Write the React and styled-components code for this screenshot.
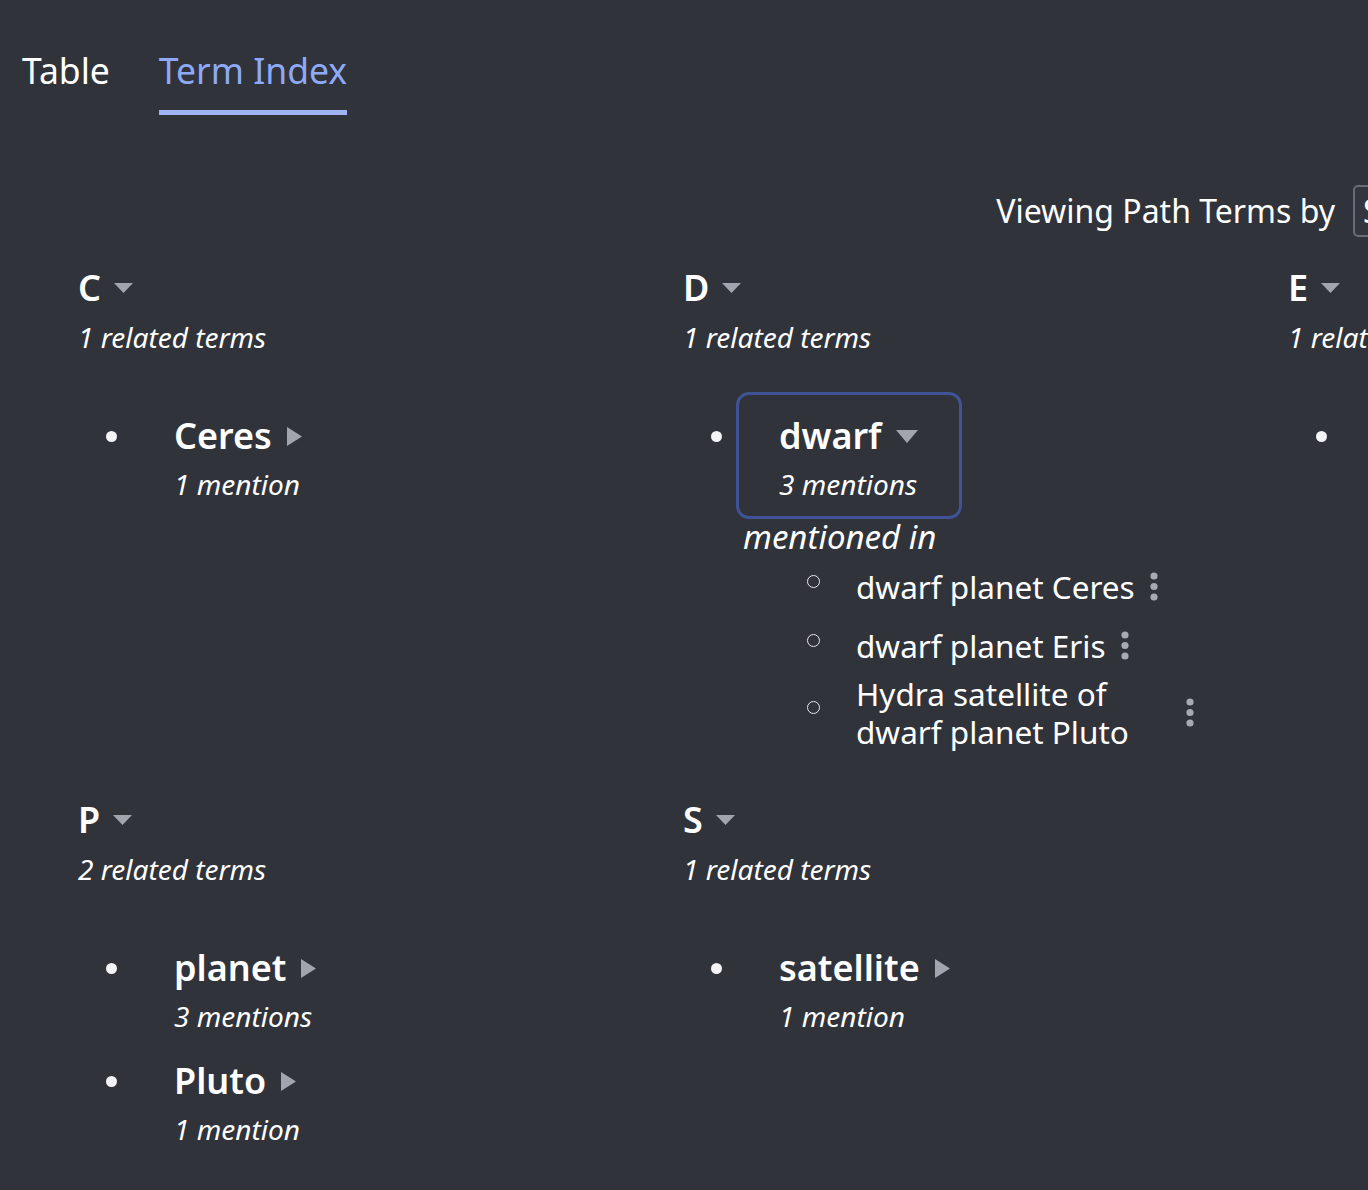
import React from "react";
import styled, { createGlobalStyle } from "styled-components";

const Global = createGlobalStyle`
  html, body {
    margin: 0;
    padding: 0;
    background: #31333b;
    overflow: hidden;
  }
  body {
    font-family: "Noto Sans", "Open Sans", sans-serif;
    color: #ffffff;
  }
  * { box-sizing: border-box; }
`;

const Page = styled.div`
  width: 1893px;
  min-height: 1190px;
  background: #31333b;
`;

const Tabs = styled.nav`
  display: flex;
  gap: 49px;
  padding: 44px 0 0 22px;
`;

const Tab = styled.button`
  background: none;
  border: none;
  padding: 0 0 14px;
  margin: 0;
  font-family: inherit;
  font-size: 35.5px;
  line-height: 52px;
  color: ${(p) => (p.$active ? "#8eaaf6" : "#ffffff")};
  border-bottom: 5px solid ${(p) => (p.$active ? "#9fb3f5" : "transparent")};
  cursor: pointer;
`;

const Controls = styled.div`
  display: flex;
  justify-content: flex-end;
  align-items: center;
  gap: 18px;
  margin-top: 70px;
  padding-right: 340px;
`;

const ControlLabel = styled.span`
  font-size: 32px;
  line-height: 44px;
`;

const Select = styled.div`
  width: 200px;
  height: 52px;
  border: 2px solid #696c74;
  border-radius: 5px;
  background: #34363d;
  font-size: 32px;
  line-height: 48px;
  padding-left: 8px;
  color: #ffffff;
  white-space: nowrap;
  overflow: hidden;
`;

const Grid = styled.div`
  display: grid;
  grid-template-columns: repeat(3, 605px);
  row-gap: 47px;
  align-items: start;
  padding-left: 78px;
  margin-top: 29px;
`;

const Section = styled.section`
  display: flex;
  flex-direction: column;
`;

const LetterHead = styled.div`
  display: flex;
  align-items: center;
  gap: 13px;
  font-size: 36px;
  font-weight: 600;
  line-height: 44px;
`;

const Related = styled.div`
  font-size: 28px;
  font-style: italic;
  line-height: 40px;
  margin-top: 7px;
`;

const TermList = styled.ul`
  list-style: none;
  margin: 42px 0 0;
  padding: 0;
  display: flex;
  flex-direction: column;
`;

const TermItem = styled.li`
  display: grid;
  grid-template-columns: 60px auto;
  justify-content: start;
`;

const Dot = styled.span`
  display: block;
  width: 11px;
  height: 11px;
  border-radius: 50%;
  background: #f4f4f7;
  margin: 32px 0 0 28px;
`;

const TermBody = styled.div`
  display: flex;
  flex-direction: column;
  align-items: flex-start;
`;

const TermButton = styled.button`
  display: flex;
  flex-direction: column;
  align-items: flex-start;
  background: none;
  border: none;
  color: #ffffff;
  font-family: inherit;
  text-align: left;
  padding: 15px 37px 8px 36px;
  border-radius: 6px;
  outline: ${(p) => (p.$focused ? "3px solid #3f5396" : "none")};
  outline-offset: 4px;
  cursor: pointer;
`;

const TermName = styled.span`
  display: flex;
  align-items: center;
  gap: 15px;
  font-size: 36px;
  font-weight: 600;
  line-height: 44px;
`;

const Count = styled.span`
  font-size: 28px;
  font-style: italic;
  line-height: 40px;
  margin-top: 6px;
`;

const MentionedIn = styled.div`
  font-size: 33px;
  font-style: italic;
  line-height: 40px;
  margin-top: 5px;
`;

const SubList = styled.ul`
  list-style: none;
  margin: 0;
  padding: 0;
`;

const SubItem = styled.li`
  display: flex;
  align-items: center;
  min-height: 59px;
`;

const Circle = styled.span`
  flex: none;
  width: 13px;
  height: 13px;
  border-radius: 50%;
  border: 1.5px solid #e8e8ec;
  margin: 0 36px 11px 64px;
`;

const SubText = styled.span`
  max-width: 315px;
  font-size: 31.5px;
  line-height: 38px;
`;

const Kebab = styled.button`
  flex: none;
  background: none;
  border: none;
  padding: 0;
  margin-left: 15px;
  display: flex;
  cursor: pointer;
`;

const Caret = ({ dir, size }) => {
  if (dir === "right") {
    return (
      <svg width="15" height="19" viewBox="0 0 15 19" aria-hidden="true">
        <polygon points="0,0 15,9.5 0,19" fill="#a3a5ae" />
      </svg>
    );
  }
  const w = size === "sm" ? 19 : 22;
  const h = size === "sm" ? 10 : 13;
  return (
    <svg width={w} height={h} viewBox={`0 0 ${w} ${h}`} aria-hidden="true">
      <polygon points={`0,0 ${w},0 ${w / 2},${h}`} fill="#a3a5ae" />
    </svg>
  );
};

const KebabIcon = () => (
  <svg width="8" height="30" viewBox="0 0 8 30" aria-hidden="true">
    <circle cx="4" cy="4" r="3.6" fill="#a8aab3" />
    <circle cx="4" cy="14.5" r="3.6" fill="#a8aab3" />
    <circle cx="4" cy="25" r="3.6" fill="#a8aab3" />
  </svg>
);

const data = [
  {
    letter: "C",
    terms: [{ name: "Ceres", count: "1 mention" }],
  },
  {
    letter: "D",
    terms: [
      {
        name: "dwarf",
        count: "3 mentions",
        open: true,
        mentions: [
          "dwarf planet Ceres",
          "dwarf planet Eris",
          "Hydra satellite of dwarf planet Pluto",
        ],
      },
    ],
  },
  {
    letter: "E",
    terms: [{ name: "Eris", count: "1 mention" }],
  },
  {
    letter: "P",
    terms: [
      { name: "planet", count: "3 mentions" },
      { name: "Pluto", count: "1 mention" },
    ],
  },
  {
    letter: "S",
    terms: [{ name: "satellite", count: "1 mention" }],
  },
];

export default function App() {
  return (
    <Page>
      <Global />
      <Tabs>
        <Tab>Table</Tab>
        <Tab $active>Term Index</Tab>
      </Tabs>
      <Controls>
        <ControlLabel>Viewing Path Terms by</ControlLabel>
        <Select>Subject</Select>
      </Controls>
      <Grid>
        {data.map((sec) => (
          <Section key={sec.letter}>
            <LetterHead>
              {sec.letter}
              <Caret dir="down" size="sm" />
            </LetterHead>
            <Related>{sec.terms.length} related terms</Related>
            <TermList>
              {sec.terms.map((t) => (
                <TermItem key={t.name}>
                  <Dot />
                  <TermBody>
                    <TermButton $focused={t.open}>
                      <TermName>
                        {t.name}
                        <Caret dir={t.open ? "down" : "right"} />
                      </TermName>
                      <Count>{t.count}</Count>
                    </TermButton>
                    {t.open && (
                      <>
                        <MentionedIn>mentioned in</MentionedIn>
                        <SubList>
                          {t.mentions.map((m) => (
                            <SubItem key={m}>
                              <Circle />
                              <SubText>{m}</SubText>
                              <Kebab aria-label="more">
                                <KebabIcon />
                              </Kebab>
                            </SubItem>
                          ))}
                        </SubList>
                      </>
                    )}
                  </TermBody>
                </TermItem>
              ))}
            </TermList>
          </Section>
        ))}
      </Grid>
    </Page>
  );
}
